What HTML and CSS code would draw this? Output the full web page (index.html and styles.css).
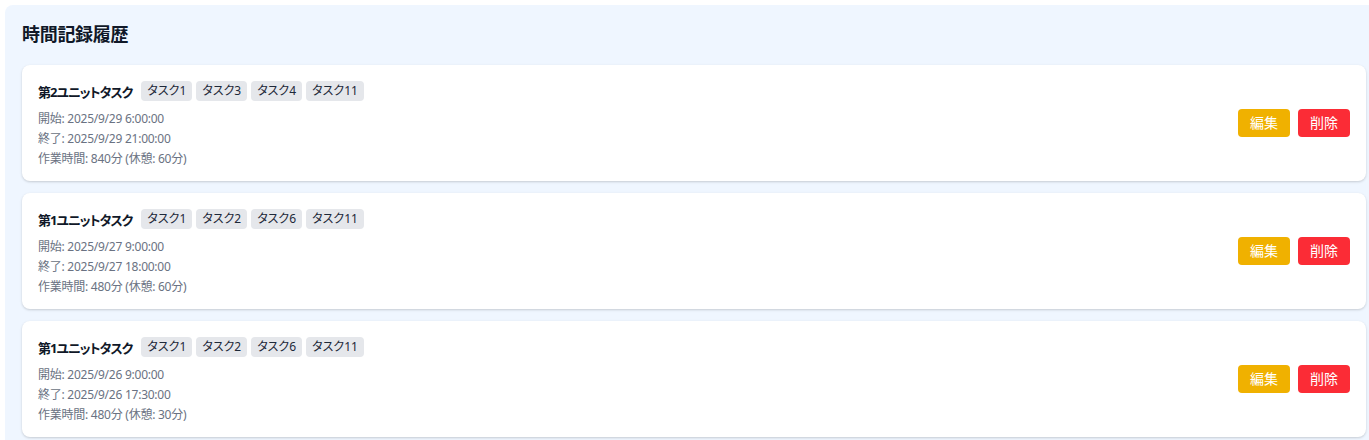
FILE: index.html
```html
<!DOCTYPE html>
<html lang="ja">
<head>
<meta charset="utf-8">
<link rel="stylesheet" href="styles.css">
</head>
<body>
<section class="panel">
  <h2 class="panel-title">時間記録履歴</h2>
  <div class="list">
    <div class="card">
      <div class="info">
        <div class="head">
          <span class="name">第2ユニットタスク</span>
          <span class="tag">タスク1</span><span class="tag">タスク3</span><span class="tag">タスク4</span><span class="tag">タスク11</span>
        </div>
        <div class="line">開始: 2025/9/29 6:00:00</div>
        <div class="line">終了: 2025/9/29 21:00:00</div>
        <div class="line">作業時間: 840分 (休憩: 60分)</div>
      </div>
      <div class="actions">
        <button class="btn edit">編集</button>
        <button class="btn del">削除</button>
      </div>
    </div>
    <div class="card">
      <div class="info">
        <div class="head">
          <span class="name">第1ユニットタスク</span>
          <span class="tag">タスク1</span><span class="tag">タスク2</span><span class="tag">タスク6</span><span class="tag">タスク11</span>
        </div>
        <div class="line">開始: 2025/9/27 9:00:00</div>
        <div class="line">終了: 2025/9/27 18:00:00</div>
        <div class="line">作業時間: 480分 (休憩: 60分)</div>
      </div>
      <div class="actions">
        <button class="btn edit">編集</button>
        <button class="btn del">削除</button>
      </div>
    </div>
    <div class="card">
      <div class="info">
        <div class="head">
          <span class="name">第1ユニットタスク</span>
          <span class="tag">タスク1</span><span class="tag">タスク2</span><span class="tag">タスク6</span><span class="tag">タスク11</span>
        </div>
        <div class="line">開始: 2025/9/26 9:00:00</div>
        <div class="line">終了: 2025/9/26 17:30:00</div>
        <div class="line">作業時間: 480分 (休憩: 30分)</div>
      </div>
      <div class="actions">
        <button class="btn edit">編集</button>
        <button class="btn del">削除</button>
      </div>
    </div>
  </div>
</section>
</body>
</html>
```

FILE: styles.css
```css
html, body {
  margin: 0;
  padding: 0;
  background: #ffffff;
  overflow: hidden;
}
body {
  padding: 5px 0 0 5px;
  font-family: "Noto Sans", "Noto Sans CJK JP", sans-serif;
  font-feature-settings: "palt";
  color: #101828;
}
.panel {
  width: 1378px;
  box-sizing: border-box;
  background: #eff6ff;
  border-radius: 8px;
  padding: 15px 17px 17px 17px;
}
.panel-title {
  margin: 0 0 17px 0;
  font-size: 18px;
  line-height: 28px;
  font-weight: 700;
  letter-spacing: -0.3px;
  color: #101828;
}
.list {
  display: flex;
  flex-direction: column;
  gap: 12px;
}
.card {
  background: #ffffff;
  border-radius: 8px;
  box-shadow: 0 1px 3px rgba(0,0,0,0.12), 0 1px 2px rgba(0,0,0,0.06);
  padding: 16px 16px 12px 16px;
  display: flex;
  align-items: center;
  justify-content: space-between;
}
.head {
  display: flex;
  align-items: center;
  height: 20px;
  margin-bottom: 8px;
}
.name {
  font-size: 13px;
  font-weight: 700;
  letter-spacing: -1px;
  color: #101828;
  margin-right: 9px;
}
.tag {
  display: inline-block;
  background: #e5e7eb;
  color: #1e2939;
  font-size: 12px;
  line-height: 20px;
  height: 20px;
  padding: 0 6px;
  border-radius: 4px;
  margin-right: 4px;
}
.line {
  font-size: 12px;
  line-height: 20px;
  letter-spacing: -0.25px;
  color: #6a7282;
}
.actions {
  display: flex;
  gap: 8px;
  margin-bottom: 4px;
}
.btn {
  border: none;
  border-radius: 4px;
  color: #ffffff;
  font-family: "Noto Sans", "Noto Sans CJK JP", sans-serif;
  font-size: 14px;
  line-height: 28px;
  height: 28px;
  width: 52px;
  padding: 0;
}
.edit { background: #f0b100; }
.del { background: #fb2c36; }
```
